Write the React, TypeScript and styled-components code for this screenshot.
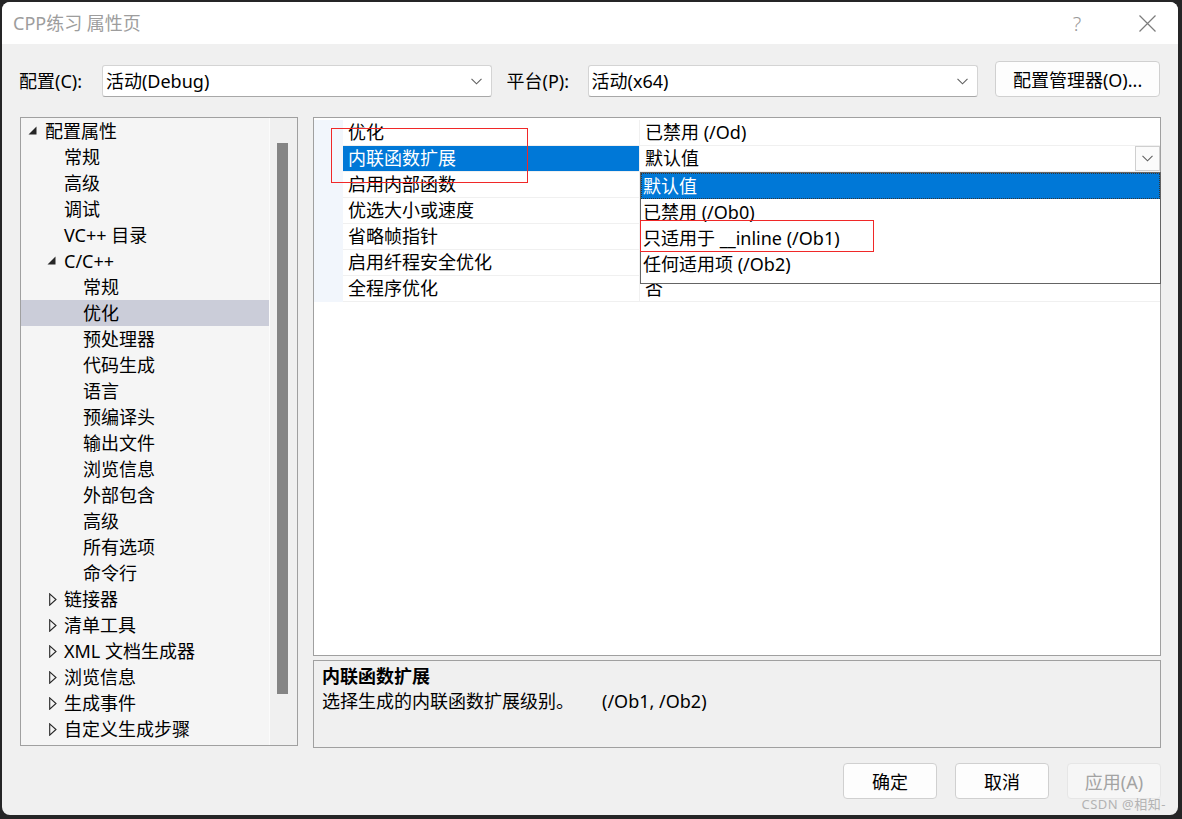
import React from 'react'
import styled, { createGlobalStyle } from 'styled-components'

const GlobalStyle = createGlobalStyle`
  html, body {
    margin: 0;
    padding: 0;
  }
  body {
    width: 1182px;
    height: 819px;
    overflow: hidden;
    background: #252526;
    font-family: "Noto Sans", "Noto Sans CJK SC", sans-serif;
    font-size: 18px;
    color: #000;
  }
  * {
    box-sizing: border-box;
  }
`

const Window = styled.div`
  position: relative;
  margin: 2px 0 0 2px;
  width: 1176px;
  height: 813px;
  background: #f0f0f0;
  border-radius: 8px;
  overflow: hidden;
  display: flex;
  flex-direction: column;
`

const TitleBar = styled.div`
  height: 42px;
  flex: none;
  background: #ffffff;
  display: flex;
  align-items: center;
  padding-left: 11px;
`

const Title = styled.div`
  color: #9d9d9d;
  font-size: 18px;
  line-height: 42px;
  flex: 1;
`

const TitleButton = styled.div`
  width: 46px;
  height: 42px;
  display: flex;
  align-items: center;
  justify-content: center;
  color: #9a9a9a;
  font-size: 20px;
  font-weight: 300;
`

const CloseButton = styled(TitleButton)`
  margin-left: 24px;
  margin-right: 8px;
`

const ConfigRow = styled.div`
  display: flex;
  align-items: flex-end;
  margin-top: 18px;
  padding: 0 18px 0 17px;
  height: 35px;
`

const Label = styled.div<{ $width: number }>`
  width: ${(p) => p.$width}px;
  line-height: 32px;
  white-space: nowrap;
`

const Combo = styled.div<{ $width: number }>`
  width: ${(p) => p.$width}px;
  height: 32px;
  background: #ffffff;
  border: 1px solid #d4d4d4;
  border-bottom-color: #a8a8a8;
  border-radius: 3px;
  display: flex;
  align-items: center;
  padding: 0 9px 0 3px;
  line-height: 30px;
  span {
    flex: 1;
  }
`

const Spacer = styled.div<{ $width: number }>`
  width: ${(p) => p.$width}px;
  flex: none;
`

const PushButton = styled.div<{ $width: number; $disabled?: boolean }>`
  width: ${(p) => p.$width}px;
  height: 36px;
  display: flex;
  align-items: center;
  justify-content: center;
  background: ${(p) => (p.$disabled ? '#f6f6f6' : '#fdfdfd')};
  border: 1px solid ${(p) => (p.$disabled ? '#e6e6e6' : '#d0d0d0')};
  border-radius: 4px;
  color: ${(p) => (p.$disabled ? '#a3a3a3' : '#000')};
  white-space: nowrap;
`

const Main = styled.div`
  display: flex;
  align-items: flex-start;
  gap: 15px;
  margin-top: 20px;
  padding: 0 17px 0 18px;
`

const TreePanel = styled.div`
  width: 278px;
  height: 629px;
  flex: none;
  border: 1px solid #a0a0a0;
  display: flex;
  background: #f0f0f0;
`

const TreeList = styled.div`
  width: 249px;
  background: #f5f5f5;
  border-right: 1px solid #fbfbfb;
  overflow: hidden;
`

const TreeRow = styled.div<{ $level: number; $selected?: boolean }>`
  height: 26px;
  display: flex;
  align-items: center;
  padding-left: ${(p) => 5 + p.$level * 19}px;
  background: ${(p) => (p.$selected ? '#cbcdd9' : 'transparent')};
  white-space: nowrap;
  line-height: 26px;
`

const ArrowBox = styled.div`
  width: 19px;
  height: 26px;
  flex: none;
  display: flex;
  align-items: center;
`

const ScrollTrack = styled.div`
  flex: 1;
  padding: 25px 0 0 7px;
`

const ScrollThumb = styled.div`
  width: 11px;
  height: 551px;
  background: #858585;
`

const RightColumn = styled.div`
  flex: 1;
  display: flex;
  flex-direction: column;
  gap: 4px;
`

const GridPanel = styled.div`
  position: relative;
  height: 539px;
  border: 1px solid #a0a0a0;
  background: #ffffff;
  padding-top: 2px;
`

const PropRow = styled.div`
  display: grid;
  grid-template-columns: 29px 297px 1fr;
  height: 26px;
`

const Gutter = styled.div`
  background: #f2f6fc;
`

const NameCell = styled.div<{ $selected?: boolean }>`
  padding-left: 5px;
  line-height: 25px;
  border-bottom: 1px solid #f0f0f0;
  border-right: 1px solid #f0f0f0;
  background: ${(p) => (p.$selected ? '#0078d7' : '#ffffff')};
  color: ${(p) => (p.$selected ? '#ffffff' : '#000')};
  white-space: nowrap;
`

const ValueCell = styled.div`
  display: flex;
  align-items: center;
  padding-left: 5px;
  line-height: 25px;
  border-bottom: 1px solid #f0f0f0;
  white-space: nowrap;
  span {
    flex: 1;
  }
`

const DropButton = styled.div`
  width: 25px;
  height: 25px;
  border: 1px solid #cfcfcf;
  background: #fbfbfb;
  display: flex;
  align-items: center;
  justify-content: center;
`

const DropList = styled.div`
  position: absolute;
  left: 326px;
  top: 54px;
  width: 521px;
  height: 112px;
  background: #ffffff;
  border: 1px solid #646464;
  z-index: 2;
`

const DropItem = styled.div<{ $selected?: boolean }>`
  height: 26px;
  line-height: 26px;
  padding-left: 2px;
  background: ${(p) => (p.$selected ? '#0078d7' : '#ffffff')};
  color: ${(p) => (p.$selected ? '#ffffff' : '#000')};
  outline: ${(p) => (p.$selected ? '1px dotted #333' : 'none')};
  outline-offset: -1px;
  white-space: pre;
`

const Marker = styled.div<{ $left: number; $top: number; $w: number; $h: number }>`
  position: absolute;
  left: ${(p) => p.$left}px;
  top: ${(p) => p.$top}px;
  width: ${(p) => p.$w}px;
  height: ${(p) => p.$h}px;
  border: 1px solid #f02828;
  z-index: 3;
  pointer-events: none;
`

const DescPanel = styled.div`
  height: 88px;
  border: 1px solid #a0a0a0;
  background: #f0f0f0;
  padding: 3px 8px;
  line-height: 25px;
`

const DescTitle = styled.div`
  font-weight: 700;
`

const DescText = styled.div`
  white-space: nowrap;
`

const Flags = styled.span`
  margin-left: 28px;
`

const Footer = styled.div`
  display: flex;
  justify-content: flex-end;
  gap: 18px;
  margin-top: 15px;
  padding-right: 17px;
`

const Watermark = styled.div`
  position: absolute;
  right: 12px;
  bottom: 3px;
  font-size: 13px;
  line-height: 16px;
  color: #b3b3b3;
  letter-spacing: 0.5px;
`

const Chevron = () => (
  <svg width="11" height="7" viewBox="0 0 11 7">
    <path d="M0.5 0.8 L5.5 5.8 L10.5 0.8" fill="none" stroke="#606060" strokeWidth="1.1" />
  </svg>
)

const OpenArrow = () => (
  <svg width="9" height="9" viewBox="0 0 9 9" style={{ marginLeft: 2, marginTop: -2 }}>
    <path d="M8.5 0.5 L8.5 8.5 L0.5 8.5 Z" fill="#262626" />
  </svg>
)

const ClosedArrow = () => (
  <svg width="8" height="13" viewBox="0 0 8 13" style={{ marginLeft: 4 }}>
    <path d="M0.7 0.8 L7 6.5 L0.7 12.2 Z" fill="none" stroke="#262626" strokeWidth="1.1" />
  </svg>
)

type TreeItem = { label: string; level: number; arrow?: 'open' | 'closed'; selected?: boolean }

const tree: TreeItem[] = [
  { label: '配置属性', level: 0, arrow: 'open' },
  { label: '常规', level: 1 },
  { label: '高级', level: 1 },
  { label: '调试', level: 1 },
  { label: 'VC++ 目录', level: 1 },
  { label: 'C/C++', level: 1, arrow: 'open' },
  { label: '常规', level: 2 },
  { label: '优化', level: 2, selected: true },
  { label: '预处理器', level: 2 },
  { label: '代码生成', level: 2 },
  { label: '语言', level: 2 },
  { label: '预编译头', level: 2 },
  { label: '输出文件', level: 2 },
  { label: '浏览信息', level: 2 },
  { label: '外部包含', level: 2 },
  { label: '高级', level: 2 },
  { label: '所有选项', level: 2 },
  { label: '命令行', level: 2 },
  { label: '链接器', level: 1, arrow: 'closed' },
  { label: '清单工具', level: 1, arrow: 'closed' },
  { label: 'XML 文档生成器', level: 1, arrow: 'closed' },
  { label: '浏览信息', level: 1, arrow: 'closed' },
  { label: '生成事件', level: 1, arrow: 'closed' },
  { label: '自定义生成步骤', level: 1, arrow: 'closed' },
]

// values under the open list are hidden by it, so they are left blank
const properties: [string, string][] = [
  ['优化', '已禁用 (/Od)'],
  ['内联函数扩展', '默认值'],
  ['启用内部函数', ''],
  ['优选大小或速度', ''],
  ['省略帧指针', ''],
  ['启用纤程安全优化', ''],
  ['全程序优化', '否'],
]

const options = ['默认值', '已禁用 (/Ob0)', '只适用于 __inline (/Ob1)', '任何适用项 (/Ob2)']

export default function App() {
  return (
    <>
      <GlobalStyle />
      <Window>
        <TitleBar>
          <Title>CPP练习 属性页</Title>
          <TitleButton>?</TitleButton>
          <CloseButton>
            <svg width="17" height="17" viewBox="0 0 17 17">
              <path d="M0.5 0.5 L16.5 16.5 M16.5 0.5 L0.5 16.5" stroke="#7c7c7c" strokeWidth="1.2" />
            </svg>
          </CloseButton>
        </TitleBar>

        <ConfigRow>
          <Label $width={83}>配置(C):</Label>
          <Combo $width={390}>
            <span>活动(Debug)</span>
            <Chevron />
          </Combo>
          <Spacer $width={15} />
          <Label $width={81}>平台(P):</Label>
          <Combo $width={391}>
            <span>活动(x64)</span>
            <Chevron />
          </Combo>
          <Spacer $width={17} />
          <PushButton $width={165}>配置管理器(O)...</PushButton>
        </ConfigRow>

        <Main>
          <TreePanel>
            <TreeList>
              {tree.map((item, i) => (
                <TreeRow key={i} $level={item.level} $selected={item.selected}>
                  <ArrowBox>
                    {item.arrow === 'open' && <OpenArrow />}
                    {item.arrow === 'closed' && <ClosedArrow />}
                  </ArrowBox>
                  {item.label}
                </TreeRow>
              ))}
            </TreeList>
            <ScrollTrack>
              <ScrollThumb />
            </ScrollTrack>
          </TreePanel>

          <RightColumn>
            <GridPanel>
              {properties.map(([name, value], i) => (
                <PropRow key={i}>
                  <Gutter />
                  <NameCell $selected={i === 1}>{name}</NameCell>
                  <ValueCell>
                    <span>{value}</span>
                    {i === 1 && (
                      <DropButton>
                        <Chevron />
                      </DropButton>
                    )}
                  </ValueCell>
                </PropRow>
              ))}
              <DropList>
                {options.map((o, i) => (
                  <DropItem key={i} $selected={i === 0}>
                    {o}
                  </DropItem>
                ))}
              </DropList>
              <Marker $left={17} $top={10} $w={197} $h={55} />
              <Marker $left={326} $top={102} $w={234} $h={32} />
            </GridPanel>
            <DescPanel>
              <DescTitle>内联函数扩展</DescTitle>
              <DescText>
                选择生成的内联函数扩展级别。<Flags>(/Ob1, /Ob2)</Flags>
              </DescText>
            </DescPanel>
          </RightColumn>
        </Main>

        <Footer>
          <PushButton $width={94}>确定</PushButton>
          <PushButton $width={94}>取消</PushButton>
          <PushButton $width={94} $disabled>
            应用(A)
          </PushButton>
        </Footer>

        <Watermark>CSDN @相知-</Watermark>
      </Window>
    </>
  )
}
